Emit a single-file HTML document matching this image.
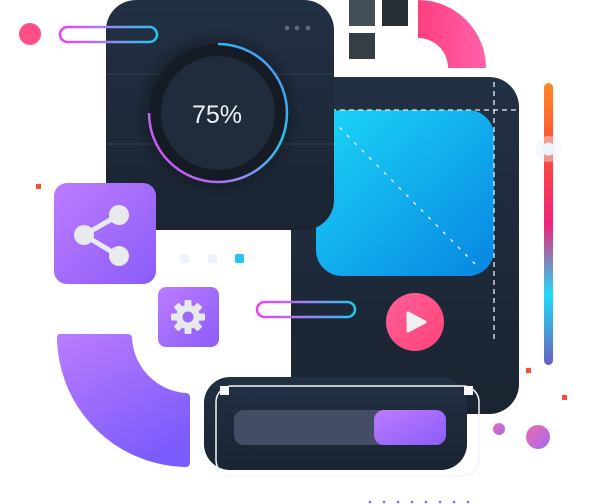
<!DOCTYPE html>
<html><head><meta charset="utf-8"><style>
html,body{margin:0;padding:0;background:#fff;width:604px;height:504px;overflow:hidden}
svg{display:block}
</style></head><body>
<svg width="604" height="504" viewBox="0 0 604 504" xmlns="http://www.w3.org/2000/svg">
<defs>
<linearGradient id="pill" x1="0" x2="1"><stop offset="0" stop-color="#f03cf5"/><stop offset="0.5" stop-color="#9a84f5"/><stop offset="1" stop-color="#1ec8f5"/></linearGradient>
<linearGradient id="card" x1="0" y1="0" x2="0" y2="1"><stop offset="0" stop-color="#223044"/><stop offset="1" stop-color="#1a2431"/></linearGradient>
<linearGradient id="blue" x1="0" y1="0" x2="1" y2="1"><stop offset="0" stop-color="#1bd6f8"/><stop offset="1" stop-color="#0885e2"/></linearGradient>
<linearGradient id="purp" x1="0" y1="0" x2="1" y2="1"><stop offset="0" stop-color="#bd7bff"/><stop offset="1" stop-color="#8a5df8"/></linearGradient>
<linearGradient id="purp2" x1="0" y1="0" x2="0.6" y2="1"><stop offset="0" stop-color="#bb7bfd"/><stop offset="1" stop-color="#7c5cfc"/></linearGradient>
<linearGradient id="pink" x1="0" x2="1"><stop offset="0" stop-color="#ff3f7e"/><stop offset="1" stop-color="#ff61ab"/></linearGradient>
<linearGradient id="play" x1="0" y1="0" x2="1" y2="1"><stop offset="0" stop-color="#ff6098"/><stop offset="1" stop-color="#ff4379"/></linearGradient>
<linearGradient id="slider" x1="0" y1="0" x2="0" y2="1"><stop offset="0" stop-color="#ff8a22"/><stop offset="0.25" stop-color="#ff4a3a"/><stop offset="0.5" stop-color="#f0247a"/><stop offset="0.75" stop-color="#1fdcf8"/><stop offset="1" stop-color="#6a5fbd"/></linearGradient>
<linearGradient id="arc" x1="0" y1="1" x2="1" y2="0.2"><stop offset="0" stop-color="#f03cf5"/><stop offset="0.45" stop-color="#8b8cf5"/><stop offset="0.75" stop-color="#1ec8f5"/><stop offset="1" stop-color="#5a90f0"/></linearGradient>
<linearGradient id="dot" x1="0" y1="0" x2="1" y2="1"><stop offset="0" stop-color="#f06bb0"/><stop offset="1" stop-color="#9f6cf0"/></linearGradient>
<radialGradient id="sh" cx="0.5" cy="0.5" r="0.5"><stop offset="0.7" stop-color="#0c1118" stop-opacity="0.6"/><stop offset="1" stop-color="#0c1118" stop-opacity="0"/></radialGradient>
</defs>

<circle cx="30" cy="34" r="11" fill="#ff4f86"/>
<rect x="36" y="184" width="5" height="5" fill="#ff4a3a"/>

<rect x="349" y="0" width="26" height="26" fill="#434e57"/>
<rect x="382" y="0" width="26" height="26" fill="#262e33"/>
<rect x="349" y="33" width="26" height="26" fill="#353e45"/>

<path d="M418 0 A68 68 0 0 1 486 68 L448 68 A30 30 0 0 0 418 38 Z" fill="url(#pink)"/>

<path d="M291 77 H489 A30 30 0 0 1 519 107 V384 A30 30 0 0 1 489 414 H291 Z" fill="url(#card)"/>
<rect x="316" y="110" width="178" height="166" rx="26" fill="url(#blue)"/>
<line x1="322" y1="110" x2="519" y2="110" stroke="#e8eef5" stroke-width="1.3" stroke-dasharray="5 4"/>
<line x1="494" y1="82" x2="494" y2="340" stroke="#e8eef5" stroke-width="1.3" stroke-dasharray="5 4"/>
<line x1="340" y1="128" x2="476" y2="265" stroke="#e8eef5" stroke-width="1.5" stroke-dasharray="2 8.5" stroke-linecap="round"/>
<circle cx="415" cy="322" r="29" fill="url(#play)"/>
<path d="M408 313 L425 322 L408 331 Z" fill="#eef0f2" stroke="#eef0f2" stroke-width="3" stroke-linejoin="round"/>

<rect x="106" y="0" width="228" height="230" rx="30" fill="url(#card)"/>
<line x1="106" y1="74" x2="334" y2="74" stroke="#34404e" stroke-width="1"/>
<line x1="106" y1="144" x2="334" y2="144" stroke="#34404e" stroke-width="1"/>
<circle cx="287" cy="28" r="2.3" fill="#5f6b7a"/><circle cx="297" cy="28" r="2.3" fill="#5f6b7a"/><circle cx="308" cy="28" r="2.3" fill="#5f6b7a"/>
<circle cx="218" cy="113" r="84" fill="url(#sh)"/>
<circle cx="218" cy="113" r="69" fill="#141b24"/>
<circle cx="218" cy="113" r="57" fill="#202c3c"/>
<path d="M218 44 A69 69 0 1 1 149 113" fill="none" stroke="url(#arc)" stroke-width="2.5"/>
<text x="217" y="123" text-anchor="middle" font-family="Liberation Sans, sans-serif" font-size="25" fill="#eef2f6">75%</text>

<rect x="60" y="27" width="97" height="15" rx="7.5" fill="none" stroke="url(#pill)" stroke-width="2.5"/>

<rect x="54" y="183" width="102" height="101" rx="13" fill="url(#purp)"/>
<line x1="84" y1="235" x2="119" y2="215" stroke="#e8ebee" stroke-width="5"/>
<line x1="84" y1="235" x2="119" y2="256" stroke="#e8ebee" stroke-width="5"/>
<circle cx="119" cy="215" r="10" fill="#e8ebee"/><circle cx="84" cy="235" r="10" fill="#e8ebee"/><circle cx="119" cy="256" r="10" fill="#e8ebee"/>

<rect x="180" y="254" width="9" height="9" rx="2" fill="#eef2fc"/>
<rect x="208" y="254" width="9" height="9" rx="2" fill="#eef2fc"/>
<rect x="235" y="254" width="9" height="9" rx="2" fill="#27c3f6"/>

<rect x="158" y="287" width="61" height="60" rx="8" fill="url(#purp)"/>
<g transform="translate(188,317)" fill="#e8ebee">
<circle r="12"/>
<g id="t"><rect x="-3.5" y="-17" width="7" height="7" rx="1.5"/></g>
<use href="#t" transform="rotate(45)"/><use href="#t" transform="rotate(90)"/><use href="#t" transform="rotate(135)"/><use href="#t" transform="rotate(180)"/><use href="#t" transform="rotate(225)"/><use href="#t" transform="rotate(270)"/><use href="#t" transform="rotate(315)"/>
<circle r="5.5" fill="#9c6cf8"/>
</g>

<rect x="257" y="302" width="98" height="15" rx="7.5" fill="none" stroke="url(#pill)" stroke-width="2.5"/>

<path d="M60 334 H128 A4 4 0 0 1 132 338 A58 58 0 0 0 186 393 A4 4 0 0 1 190 397 V463 A4 4 0 0 1 186 467 A131 131 0 0 1 57 337 A3 3 0 0 1 60 334 Z" fill="url(#purp2)"/>

<rect x="544" y="83" width="9" height="282" rx="4.5" fill="url(#slider)"/>
<circle cx="548.5" cy="149" r="13" fill="#eef2fb" opacity="0.45"/>
<circle cx="548.5" cy="149" r="6.5" fill="#eef2fb"/>

<rect x="526" y="368" width="5" height="5" fill="#ff4a3a"/>
<rect x="562" y="395" width="5" height="5" fill="#ff4a3a"/>
<circle cx="499" cy="429" r="6" fill="url(#dot)"/>
<circle cx="538" cy="437" r="12" fill="url(#dot)"/>

<rect x="204" y="377" width="263" height="93" rx="26" fill="url(#card)"/>
<rect x="216" y="386" width="263" height="90" rx="16" fill="none" stroke="#f2f5f8" stroke-width="1.5"/>
<rect x="220" y="386" width="9" height="9" fill="#f4f6f8"/>
<rect x="464" y="386" width="9" height="9" fill="#f4f6f8"/>
<rect x="234" y="410" width="212" height="35" rx="10" fill="#454d66"/>
<rect x="374" y="410" width="72" height="35" rx="10" fill="url(#purp)"/>

<g fill="#8a6cf5">
<circle cx="370" cy="502" r="1.3"/><circle cx="384" cy="502" r="1.3"/><circle cx="398" cy="502" r="1.3"/><circle cx="412" cy="502" r="1.3"/><circle cx="426" cy="502" r="1.3"/><circle cx="440" cy="502" r="1.3"/><circle cx="454" cy="502" r="1.3"/><circle cx="468" cy="502" r="1.3"/>
</g>
</svg>
</body></html>
